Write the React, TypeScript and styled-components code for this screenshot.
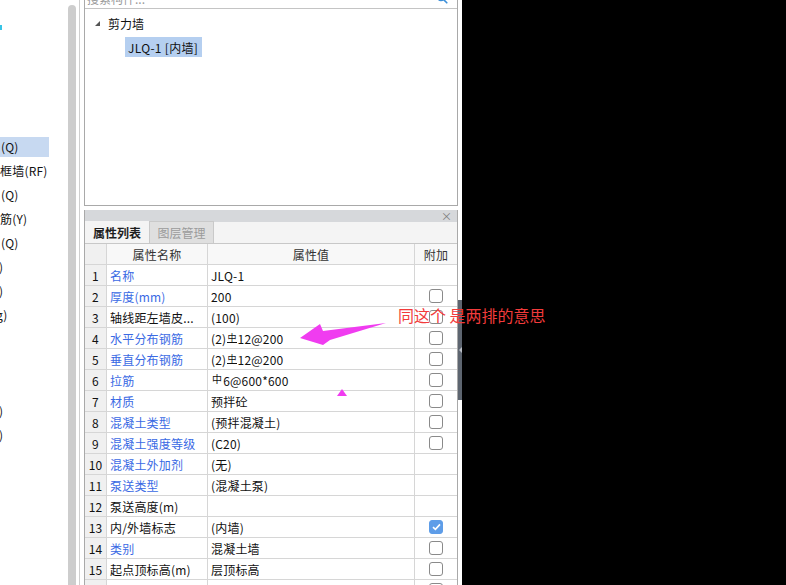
import React from 'react';
import styled, { createGlobalStyle } from 'styled-components';

const Global = createGlobalStyle`
  html, body { margin: 0; padding: 0; background: #000; }
  body {
    font-family: "Noto Sans CJK SC", "Microsoft YaHei", sans-serif;
    font-size: 12px;
    color: #111;
  }
  #root { width: 786px; height: 585px; overflow: hidden; }
  * { box-sizing: border-box; }
`;

const Screen = styled.div`
  position: relative;
  display: flex;
  width: 786px;
  height: 585px;
  background: #000;
  overflow: hidden;
`;

const Workspace = styled.div`
  display: flex;
  flex-shrink: 0;
  width: 462px;
  height: 100%;
  background: #fff;
`;

/* ---------- left component list ---------- */
const SidePanel = styled.div`
  display: flex;
  width: 84px;
  height: 100%;
`;

const ComponentList = styled.div`
  width: 68px;
  padding-top: 15px;
  overflow: hidden;
`;

const ListRow = styled.div`
  display: flex;
  align-items: center;
  height: 24px;
`;

const ListLabel = styled.span<{ $selected?: boolean; $indent?: number }>`
  display: flex;
  align-items: center;
  height: 20px;
  width: 49px;
  padding-left: 1px;
  margin-left: ${(p) => p.$indent ?? 0}px;
  background: ${(p) => (p.$selected ? '#c7d9f1' : 'transparent')};
  color: #111;
  white-space: nowrap;
  line-height: 20px;
  letter-spacing: 0.2px;
`;

const IconStub = styled.span`
  display: block;
  width: 2px;
  height: 5px;
  margin-top: 1px;
  background: #37c4e6;
`;

const ScrollTrack = styled.div`
  display: flex;
  flex-direction: column;
  width: 8px;
  padding-top: 5px;
`;

const ScrollThumb = styled.div`
  flex: 1;
  background: #cdcdcd;
  border-radius: 4px 4px 0 0;
`;

const Divider = styled.div`
  width: 1px;
  margin: 0 4px 0 3px;
  background: #cfcfcf;
`;

/* ---------- main column ---------- */
const MainColumn = styled.div`
  display: flex;
  flex-direction: column;
  width: 374px;
  height: 100%;
`;

const TreePanel = styled.div`
  display: flex;
  flex-direction: column;
  height: 206px;
  margin-bottom: 4px;
  border: 1px solid #a9a9a9;
  border-top: none;
`;

const SearchRow = styled.div`
  height: 9px;
  overflow: hidden;
  border-bottom: 1px solid #c4c4c4;
`;

const SearchInner = styled.div`
  display: flex;
  align-items: center;
  justify-content: space-between;
  height: 20px;
  margin-top: -12px;
  padding: 0 9px 0 2px;
  color: #9a9a9a;
`;

const Tree = styled.div`
  display: flex;
  flex-direction: column;
  gap: 4px;
  padding-top: 4px;
`;

const TreeNode = styled.div`
  display: flex;
  align-items: center;
  gap: 8px;
  height: 20px;
  padding-left: 10px;
  color: #111;
`;

const Caret = styled.span`
  display: block;
  width: 0;
  height: 0;
  border-left: 5px solid transparent;
  border-bottom: 5px solid #555;
`;

const TreeLeaf = styled.div<{ $selected?: boolean }>`
  display: flex;
  align-items: center;
  align-self: flex-start;
  height: 20px;
  margin-left: 40px;
  padding: 0 4px 0 3px;
  background: ${(p) => (p.$selected ? '#b5cff0' : 'transparent')};
  color: #111;
  letter-spacing: 0.3px;
`;

const PropsPanel = styled.div`
  display: flex;
  flex-direction: column;
  flex: 1;
  border-left: 1px solid #a9a9a9;
  border-right: 1px solid #a9a9a9;
  overflow: hidden;
`;

const PanelTitleBar = styled.div`
  display: flex;
  align-items: center;
  justify-content: flex-end;
  height: 12px;
  padding-right: 5px;
  background: #d6d8db;
  color: #7c7c7c;
  font-size: 11px;
  line-height: 12px;
`;

const TabStrip = styled.div`
  display: flex;
  align-items: flex-end;
  height: 22px;
  background: #f4f4f4;
  border-bottom: 1px solid #c8c8c8;
`;

const Tab = styled.div<{ $active?: boolean }>`
  display: flex;
  align-items: center;
  justify-content: center;
  height: 22px;
  width: ${(p) => (p.$active ? 64 : 65)}px;
  background: ${(p) => (p.$active ? '#f4f4f4' : '#dfdfdf')};
  border: ${(p) => (p.$active ? 'none' : '1px solid #c9c9c9')};
  border-bottom: none;
  color: ${(p) => (p.$active ? '#1e1e1e' : '#9b9b9b')};
  font-weight: ${(p) => (p.$active ? 700 : 400)};
`;

const GridRow = styled.div<{ $header?: boolean }>`
  display: grid;
  grid-template-columns: 22px 101px 207px 42px;
  height: 21px;
  flex-shrink: 0;
  background: ${(p) => (p.$header ? '#f8f8f8' : '#fff')};
  color: ${(p) => (p.$header ? '#333' : '#111')};
`;

const Cell = styled.div<{ $align?: 'center' | 'left'; $index?: boolean; $last?: boolean; $blue?: boolean }>`
  display: flex;
  align-items: center;
  justify-content: ${(p) => (p.$align === 'center' ? 'center' : 'flex-start')};
  padding-left: ${(p) => (p.$align === 'center' ? 0 : 3)}px;
  border-right: ${(p) => (p.$last ? 'none' : '1px solid #d6d6d6')};
  border-bottom: 1px solid #d6d6d6;
  background: ${(p) => (p.$index ? '#f0f0f0' : 'transparent')};
  color: ${(p) => (p.$blue ? '#3a6ae4' : 'inherit')};
  white-space: nowrap;
  overflow: hidden;
  letter-spacing: 0.2px;
`;

const Checkbox = styled.span<{ $checked?: boolean }>`
  display: flex;
  align-items: center;
  justify-content: center;
  width: 14px;
  height: 14px;
  border-radius: 3px;
  border: 1px solid ${(p) => (p.$checked ? '#5e9de8' : '#8a8a8a')};
  background: ${(p) => (p.$checked ? '#5e9de8' : '#fff')};
`;

const RebarMark = styled.span<{ $grade?: 'A' | 'C' }>`
  display: inline-block;
  font-size: ${(p) => (p.$grade === 'C' ? 9 : 10)}px;
  line-height: 9px;
  margin: 0 1px;
  position: relative;
  top: -3px;
  border-bottom: ${(p) => (p.$grade === 'C' ? '1px solid #111' : 'none')};
`;

const SplitterColumn = styled.div`
  display: flex;
  flex-direction: column;
  width: 4px;
  padding-top: 300px;
`;

const SplitterHandle = styled.div`
  display: flex;
  align-items: center;
  justify-content: center;
  height: 100px;
  background: #5d6570;
`;

const HandleArrow = styled.span`
  display: block;
  width: 0;
  height: 0;
  border-top: 3px solid transparent;
  border-bottom: 3px solid transparent;
  border-right: 3px solid #b9bec5;
`;

/* ---------- annotations ---------- */
const Note = styled.div`
  position: absolute;
  left: 398px;
  top: 306px;
  font-size: 16px;
  line-height: 18px;
  color: #f23b3b;
  white-space: nowrap;
`;

const Mark = styled.svg<{ $x: number; $y: number }>`
  position: absolute;
  left: ${(p) => p.$x}px;
  top: ${(p) => p.$y}px;
  overflow: visible;
`;

type Row = {
  n: number;
  name: string;
  blue: boolean;
  value: React.ReactNode;
  cb: null | boolean;
};

const rebar = (pre: string, grade: 'A' | 'C', post: string) => (
  <span>
    {pre}
    <RebarMark $grade={grade}>中</RebarMark>
    {post}
  </span>
);

const rows: Row[] = [
  { n: 1, name: '名称', blue: true, value: 'JLQ-1', cb: null },
  { n: 2, name: '厚度(mm)', blue: true, value: '200', cb: false },
  { n: 3, name: '轴线距左墙皮...', blue: false, value: '(100)', cb: false },
  { n: 4, name: '水平分布钢筋', blue: true, value: rebar('(2)', 'C', '12@200'), cb: false },
  { n: 5, name: '垂直分布钢筋', blue: true, value: rebar('(2)', 'C', '12@200'), cb: false },
  { n: 6, name: '拉筋', blue: true, value: rebar('', 'A', '6@600*600'), cb: false },
  { n: 7, name: '材质', blue: true, value: '预拌砼', cb: false },
  { n: 8, name: '混凝土类型', blue: true, value: '(预拌混凝土)', cb: false },
  { n: 9, name: '混凝土强度等级', blue: true, value: '(C20)', cb: false },
  { n: 10, name: '混凝土外加剂', blue: true, value: '(无)', cb: null },
  { n: 11, name: '泵送类型', blue: true, value: '(混凝土泵)', cb: null },
  { n: 12, name: '泵送高度(m)', blue: false, value: '', cb: null },
  { n: 13, name: '内/外墙标志', blue: false, value: '(内墙)', cb: true },
  { n: 14, name: '类别', blue: true, value: '混凝土墙', cb: false },
  { n: 15, name: '起点顶标高(m)', blue: false, value: '层顶标高', cb: false },
  { n: 16, name: '终点顶标高(m)', blue: false, value: '层顶标高', cb: false },
];

const listItems: { text?: string; selected?: boolean; indent?: number; stub?: boolean }[] = [
  { stub: true },
  {},
  {},
  {},
  {},
  { text: '(Q)', selected: true },
  { text: '框墙(RF)', indent: -1 },
  { text: '(Q)' },
  { text: '筋(Y)', indent: -1 },
  { text: '(Q)' },
  { text: ')', indent: -2 },
  { text: ')', indent: -2 },
  { text: 'g)', indent: -5 },
  {},
  {},
  {},
  { text: ')', indent: -2 },
  { text: ')', indent: -2 },
];

const SearchIcon = () => (
  <svg width="12" height="12" viewBox="0 0 12 12" fill="none">
    <circle cx="5" cy="5" r="3.6" stroke="#3b8fd9" strokeWidth="1.4" />
    <path d="M7.6 7.6 L10.8 10.8" stroke="#3b8fd9" strokeWidth="1.6" strokeLinecap="round" />
  </svg>
);

const CheckMark = () => (
  <svg width="9" height="8" viewBox="0 0 9 8" fill="none">
    <path d="M1 4.2 L3.4 6.4 L8 1.4" stroke="#fff" strokeWidth="1.6" />
  </svg>
);

export default function App() {
  return (
    <>
      <Global />
      <Screen>
        <Workspace>
          <SidePanel>
            <ComponentList>
              {listItems.map((it, i) => (
                <ListRow key={i}>
                  {it.stub ? (
                    <IconStub />
                  ) : it.text ? (
                    <ListLabel $selected={it.selected} $indent={it.indent}>
                      {it.text}
                    </ListLabel>
                  ) : null}
                </ListRow>
              ))}
            </ComponentList>
            <ScrollTrack>
              <ScrollThumb />
            </ScrollTrack>
            <Divider />
          </SidePanel>

          <MainColumn>
            <TreePanel>
              <SearchRow>
                <SearchInner>
                  <span>搜索构件...</span>
                  <SearchIcon />
                </SearchInner>
              </SearchRow>
              <Tree>
                <TreeNode>
                  <Caret />
                  <span>剪力墙</span>
                </TreeNode>
                <TreeLeaf $selected>JLQ-1 [内墙]</TreeLeaf>
              </Tree>
            </TreePanel>

            <PropsPanel>
              <PanelTitleBar>×</PanelTitleBar>
              <TabStrip>
                <Tab $active>属性列表</Tab>
                <Tab>图层管理</Tab>
              </TabStrip>
              <GridRow $header>
                <Cell $align="center" $index />
                <Cell $align="center">属性名称</Cell>
                <Cell $align="center">属性值</Cell>
                <Cell $align="center" $last>附加</Cell>
              </GridRow>
              {rows.map((r) => (
                <GridRow key={r.n}>
                  <Cell $align="center" $index>{r.n}</Cell>
                  <Cell $blue={r.blue}>{r.name}</Cell>
                  <Cell>{r.value}</Cell>
                  <Cell $align="center" $last>
                    {r.cb !== null && (
                      <Checkbox $checked={r.cb}>{r.cb && <CheckMark />}</Checkbox>
                    )}
                  </Cell>
                </GridRow>
              ))}
            </PropsPanel>
          </MainColumn>

          <SplitterColumn>
            <SplitterHandle>
              <HandleArrow />
            </SplitterHandle>
          </SplitterColumn>
        </Workspace>

        <Note>同这个 是两排的意思</Note>
        <Mark $x={298} $y={320} width="92" height="28" viewBox="0 0 92 28">
          <polygon points="2,18 22,4 25,11 88,3 32,20 25,25" fill="#f03cf0" />
        </Mark>
        <Mark $x={336} $y={388} width="12" height="9" viewBox="0 0 12 9">
          <polygon points="6,1 1,8 11,8" fill="#f03cf0" />
        </Mark>
      </Screen>
    </>
  );
}
